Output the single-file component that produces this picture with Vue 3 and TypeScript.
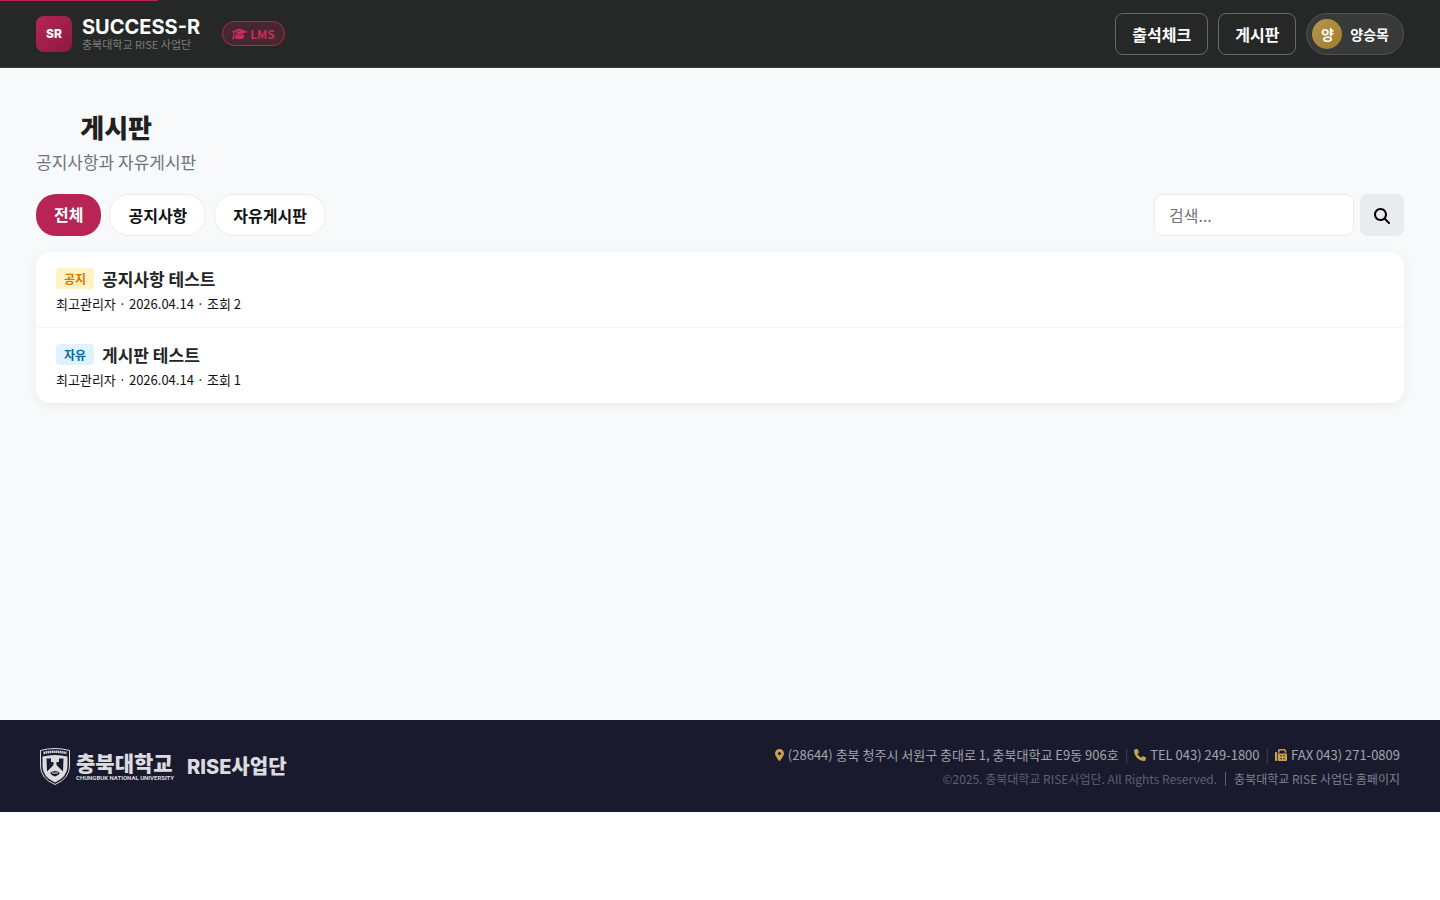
<script setup lang="ts">
import { computed, ref } from 'vue'

interface Post {
  id: number
  kind: 'notice' | 'free'
  title: string
  author: string
  date: string
  views: number
}

type Filter = 'all' | Post['kind']

const tabs: { key: Filter; label: string }[] = [
  { key: 'all', label: '전체' },
  { key: 'notice', label: '공지사항' },
  { key: 'free', label: '자유게시판' },
]

const kindLabels: Record<Post['kind'], string> = { notice: '공지', free: '자유' }

const posts: Post[] = [
  { id: 2, kind: 'notice', title: '공지사항 테스트', author: '최고관리자', date: '2026.04.14', views: 2 },
  { id: 1, kind: 'free', title: '게시판 테스트', author: '최고관리자', date: '2026.04.14', views: 1 },
]

const active = ref<Filter>('all')
const query = ref('')
const keyword = ref('')

const visiblePosts = computed(() =>
  posts.filter(
    (post) =>
      (active.value === 'all' || post.kind === active.value) && post.title.includes(keyword.value),
  ),
)

function search() {
  keyword.value = query.value.trim()
}
</script>

<template>
  <div class="page">
    <header class="header">
      <a class="brand" href="#">
        <span class="brand-mark">SR</span>
        <span class="brand-text">
          <span class="brand-name">SUCCESS-R</span>
          <span class="brand-sub">충북대학교 RISE 사업단</span>
        </span>
      </a>
      <span class="lms">
        <svg class="cap" viewBox="0 0 640 512" aria-hidden="true">
          <path
            d="M320 32c-8.1 0-16.1 1.4-23.7 4.1L15.8 137.4C6.3 140.9 0 149.9 0 160s6.3 19.1 15.8 22.6l57.9 20.9C57.3 229.3 48 259.8 48 291.9v28.1c0 28.4-10.8 57.7-22.3 80.8c-6.5 13-13.9 25.8-22.5 37.6C0 442.7-.9 448.3 .9 453.4s6 8.9 11.2 10.2l64 16c4.2 1.1 8.7 .3 12.4-2s6.3-6.1 7.1-10.4c8.6-42.8 4.3-81.2-2.1-108.7C90.3 344.3 86 329.8 80 316.5V291.9c0-30.2 10.2-58.7 27.9-81.5c12.9-15.5 29.6-28 49.2-35.7l157-61.7c8.2-3.2 17.5 .8 20.7 9s-.8 17.5-9 20.7l-157 61.7c-12.4 4.9-23.3 12.4-32.2 21.6l159.6 57.6c7.6 2.7 15.6 4.1 23.7 4.1s16.1-1.4 23.7-4.1L624.2 182.6c9.5-3.4 15.8-12.5 15.8-22.6s-6.3-19.1-15.8-22.6L343.7 36.1C336.1 33.4 328.1 32 320 32zM128 408c0 35.3 86 72 192 72s192-36.7 192-72L496.7 262.6 354.5 314c-11.1 4-22.8 6-34.5 6s-23.5-2-34.5-6L143.3 262.6 128 408z"
          />
        </svg>
        LMS
      </span>
      <nav class="nav">
        <a class="nav-link" href="#">출석체크</a>
        <a class="nav-link" href="#">게시판</a>
        <button class="user" type="button">
          <span class="avatar">양</span>
          <span>양승목</span>
        </button>
      </nav>
      <div class="progress"></div>
    </header>

    <main class="main">
      <div class="heading">
        <h1>게시판</h1>
        <p>공지사항과 자유게시판</p>
      </div>

      <div class="toolbar">
        <div class="tabs">
          <button
            v-for="tab in tabs"
            :key="tab.key"
            type="button"
            class="tab"
            :class="{ active: active === tab.key }"
            @click="active = tab.key"
          >
            {{ tab.label }}
          </button>
        </div>
        <form class="search" @submit.prevent="search">
          <input v-model="query" type="text" placeholder="검색..." aria-label="검색" />
          <button type="submit" aria-label="검색">
            <svg viewBox="0 0 512 512" aria-hidden="true">
              <path
                d="M416 208c0 45.9-14.9 88.3-40 122.7L502.6 457.4c12.5 12.5 12.5 32.8 0 45.3s-32.8 12.5-45.3 0L330.7 376c-34.4 25.2-76.8 40-122.7 40C93.1 416 0 322.9 0 208S93.1 0 208 0S416 93.1 416 208zM208 352a144 144 0 1 0 0-288 144 144 0 1 0 0 288z"
              />
            </svg>
          </button>
        </form>
      </div>

      <ul class="list">
        <li v-for="post in visiblePosts" :key="post.id">
          <a class="post" href="#">
            <span class="post-head">
              <span class="badge" :class="post.kind">{{ kindLabels[post.kind] }}</span>
              <span class="post-title">{{ post.title }}</span>
            </span>
            <span class="meta">{{ post.author }} · {{ post.date }} · 조회 {{ post.views }}</span>
          </a>
        </li>
      </ul>
    </main>

    <footer class="footer">
      <div class="org">
        <div class="univ">
          <svg class="crest" viewBox="0 0 60 74" aria-hidden="true">
            <path
              d="M1 5Q30 -3 59 5V36Q59 61 30 73Q1 61 1 36Z"
              fill="none"
              stroke="currentColor"
              stroke-width="2"
            />
            <path d="M7 10Q30 5 53 10" fill="none" stroke="currentColor" stroke-width="5" stroke-dasharray="3 1" />
            <path
              fill-rule="evenodd"
              d="M5 17Q30 11 55 17V36Q55 58 30 69Q5 58 5 36ZM13 21H22V28H27V34L14 47ZM47 21H38V28H33V34L46 47ZM20 50Q30 42 40 50Q36 56 30 57Q24 56 20 50Z"
              fill="currentColor"
            />
            <path d="M24 50H36" stroke="currentColor" stroke-width="2" />
          </svg>
          <div class="univ-text">
            <span class="univ-name">충북대학교</span>
            <span class="univ-en">CHUNGBUK NATIONAL UNIVERSITY</span>
          </div>
        </div>
        <strong class="org-name">RISE사업단</strong>
      </div>
      <div class="info">
        <address class="contact">
          <span class="item">
            <svg class="pin" viewBox="0 0 384 512" aria-hidden="true">
              <path
                d="M215.7 499.2C267 435 384 279.4 384 192C384 86 298 0 192 0S0 86 0 192c0 87.4 117 243 168.3 307.2c12.3 15.3 35.1 15.3 47.4 0zM192 128a64 64 0 1 1 0 128 64 64 0 1 1 0-128z"
              />
            </svg>
            (28644) 충북 청주시 서원구 충대로 1, 충북대학교 E9동 906호
          </span>
          <span class="bar">|</span>
          <span class="item">
            <svg viewBox="0 0 512 512" aria-hidden="true">
              <path
                d="M164.9 24.6c-7.7-18.6-28-28.5-47.4-23.2l-88 24C12.1 30.2 0 46 0 64C0 311.4 200.6 512 448 512c18 0 33.8-12.1 38.6-29.5l24-88c5.3-19.4-4.6-39.7-23.2-47.4l-96-40c-16.3-6.8-35.2-2.1-46.3 11.6L304.7 368C234.3 334.7 177.3 277.7 144 207.3L193.3 167c13.7-11.2 18.4-30 11.6-46.3l-40-96z"
              />
            </svg>
            TEL 043) 249-1800
          </span>
          <span class="bar">|</span>
          <span class="item">
            <svg viewBox="0 0 512 512" aria-hidden="true">
              <path
                d="M128 64v96h64V64H386.7L416 93.3V160h64V93.3c0-17-6.7-33.3-18.7-45.3L432 18.7C420 6.7 403.7 0 386.7 0H192c-35.3 0-64 28.7-64 64zM0 160V480c0 17.7 14.3 32 32 32H64c17.7 0 32-14.3 32-32V160c0-17.7-14.3-32-32-32H32c-17.7 0-32 14.3-32 32zm480 32H128V480c0 17.7 14.3 32 32 32H480c17.7 0 32-14.3 32-32V224c0-17.7-14.3-32-32-32zM256 256a32 32 0 1 1 0 64 32 32 0 1 1 0-64zm96 32a32 32 0 1 1 64 0 32 32 0 1 1 -64 0zm32 96a32 32 0 1 1 0 64 32 32 0 1 1 0-64zM224 416a32 32 0 1 1 64 0 32 32 0 1 1 -64 0z"
              />
            </svg>
            FAX 043) 271-0809
          </span>
        </address>
        <div class="copyright">
          <span>©2025. 충북대학교 RISE사업단. All Rights Reserved.</span>
          <a href="#">충북대학교 RISE 사업단 홈페이지</a>
        </div>
      </div>
    </footer>
  </div>
</template>

<style>
body {
  margin: 0;
  background: #fff;
}
</style>

<style scoped>
.page,
.page * {
  box-sizing: border-box;
}

.page {
  font-family: 'Noto Sans CJK KR', 'Noto Sans', sans-serif;
  font-size: 16px;
  line-height: 24px;
  color: #111;
}

.page button,
.page input {
  font-family: inherit;
  font-size: 16px;
  line-height: 24px;
}

a {
  color: inherit;
  text-decoration: none;
}

svg {
  fill: currentColor;
  flex: none;
}

.header {
  position: relative;
  display: flex;
  align-items: center;
  height: 68px;
  padding: 0 36px;
  background: #252827;
  border-bottom: 1px solid #3b3d3e;
  color: #fff;
}

.progress {
  position: absolute;
  top: 0;
  left: 0;
  width: 11%;
  height: 1px;
  background: #b82554;
}

.brand {
  display: flex;
  align-items: center;
  gap: 10px;
}

.brand-mark {
  display: grid;
  place-items: center;
  width: 36px;
  height: 36px;
  border-radius: 8px;
  background: linear-gradient(135deg, #b82554, #8b1a3e);
  font: 800 12px/20px Inter, sans-serif;
}

.brand-text {
  display: flex;
  flex-direction: column;
}

.brand-name {
  font: 700 20px/20px Inter, sans-serif;
}

.brand-sub {
  font-size: 11px;
  line-height: 14px;
  color: #7c7e7d;
}

.lms {
  display: flex;
  align-items: center;
  gap: 3px;
  margin-left: 22px;
  padding: 0 9px;
  height: 25px;
  border: 1px solid #b82554;
  border-radius: 13px;
  background: #47272f;
  color: #c82c5e;
  font-size: 12px;
  font-weight: 700;
}

.cap {
  width: 15px;
  height: 12px;
}

.nav {
  display: flex;
  gap: 10px;
  margin-left: auto;
}

.nav-link {
  padding: 8px 16px;
  border: 1px solid #666968;
  border-radius: 8px;
  font-weight: 700;
}

.user {
  display: flex;
  align-items: center;
  gap: 8px;
  padding: 5px 14px 5px 5px;
  border: 1px solid #505352;
  border-radius: 21px;
  background: #373a39;
  color: #fff;
}

.page .user {
  font-size: 14px;
  font-weight: 700;
}

.avatar {
  display: grid;
  place-items: center;
  width: 30px;
  height: 30px;
  border-radius: 50%;
  background: linear-gradient(135deg, #b8964e, #a07c2c);
}

.main {
  min-height: calc(100vh - 248px);
  padding: 40px 36px;
  background: #f8f9fb;
}

.heading {
  width: fit-content;
  text-align: center;
}

h1 {
  margin: 0;
  font-size: 26px;
  line-height: 38px;
  font-weight: 900;
  color: #1f2120;
}

.heading p {
  margin: 0;
  font-size: 17px;
  line-height: 32px;
  color: #6c757d;
}

.toolbar {
  display: flex;
  justify-content: space-between;
  margin: 16px 0;
}

.tabs {
  display: flex;
  gap: 8px;
}

.tab {
  display: block;
  padding: 8px 18px;
  border: 1px solid #e9ecef;
  border-radius: 20px;
  background: #fff;
  color: #111;
  font-weight: 700;
}

.tab.active {
  padding-bottom: 10px;
  border: 0;
  background: #b82554;
  color: #fff;
}

.search {
  display: flex;
  gap: 6px;
}

.search input {
  width: 200px;
  height: 42px;
  padding: 8px 14px;
  border: 1px solid #e9ecef;
  border-radius: 8px;
  background: #fff;
}

.search input::placeholder {
  color: #757575;
}

.search button {
  display: grid;
  place-items: center;
  width: 44px;
  padding: 2px 0 0;
  border: 0;
  border-radius: 8px;
  background: #e9ecef;
  color: #000;
}

.search svg {
  width: 16px;
  height: 16px;
}

.list {
  margin: 0;
  padding: 0;
  list-style: none;
  overflow: hidden;
  border-radius: 14px;
  background: #fff;
  box-shadow: 0 2px 12px rgba(0, 0, 0, 0.06);
}

.list li + li {
  border-top: 1px solid #f5f5f5;
}

.post {
  display: block;
  padding: 14px 20px 11px;
}

.post-head {
  display: flex;
  align-items: flex-start;
  gap: 8px;
}

.badge {
  margin-top: 2px;
  padding: 0 8px;
  border-radius: 4px;
  font-size: 12px;
  line-height: 21px;
  font-weight: 700;
}

.badge.notice {
  background: #fff3c4;
  color: #d97706;
}

.badge.free {
  background: #e0f2fe;
  color: #0369a1;
}

.post-title {
  font-size: 17px;
  line-height: 26px;
  font-weight: 700;
  color: #222524;
}

.meta {
  display: block;
  font-size: 13px;
  line-height: 24px;
}

.footer {
  display: flex;
  align-items: center;
  justify-content: space-between;
  padding: 23px 40px 21px;
  background: #1a1a2e;
}

.org {
  display: flex;
  align-items: center;
  gap: 14px;
  color: #dcdce0;
}

.univ {
  display: flex;
  align-items: center;
  gap: 6px;
  padding-bottom: 2px;
}

.crest {
  width: 30px;
  height: 37px;
}

.univ-text {
  display: flex;
  flex-direction: column;
  width: 97px;
}

.univ-name {
  font-size: 21px;
  line-height: 24px;
  font-weight: 900;
}

.univ-en {
  font: 700 6px/8px Roboto, sans-serif;
  white-space: nowrap;
}

.org-name {
  font: 800 20px/30px Inter, 'Noto Sans CJK KR', sans-serif;
}

.info {
  text-align: right;
}

.contact {
  display: flex;
  justify-content: flex-end;
  font-size: 13px;
  font-style: normal;
  color: #a3a3ab;
}

.item {
  display: flex;
  align-items: center;
  gap: 4px;
}

.item svg {
  width: 12px;
  height: 12px;
  color: #c9a24d;
}

.item .pin {
  width: 9px;
}

.bar {
  margin: 0 6px;
  color: #48485a;
}

.copyright {
  display: flex;
  justify-content: flex-end;
  align-items: center;
  font-size: 12px;
  color: #5f5f6d;
}

.copyright a {
  margin-left: 8px;
  padding-left: 8px;
  border-left: 1px solid #5f5f6d;
  line-height: 14px;
  color: #80808b;
}
</style>
